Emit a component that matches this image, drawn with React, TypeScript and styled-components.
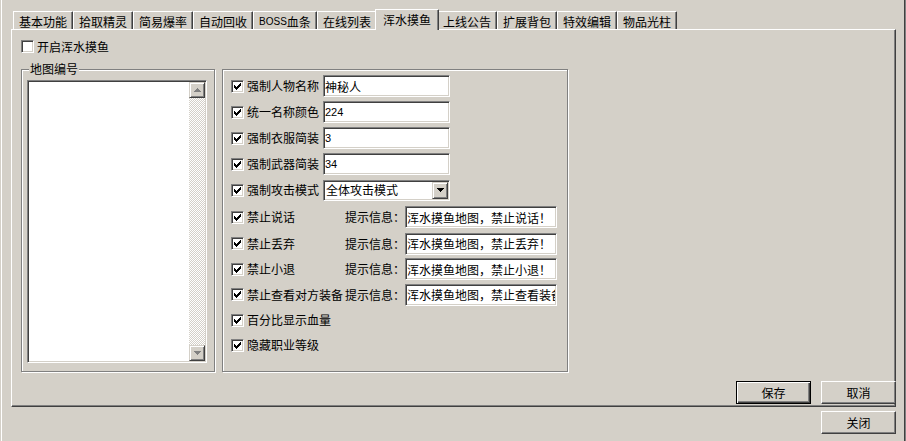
import React from "react";
import styled, { createGlobalStyle } from "styled-components";

const GlobalStyle = createGlobalStyle`
  html, body {
    margin: 0;
    padding: 0;
    background: #d4d0c8;
  }
  body {
    font-family: "Noto Sans CJK SC", "Liberation Sans", sans-serif;
    font-size: 12px;
    color: #000;
  }
`;

const Window = styled.div`
  width: 906px;
  height: 441px;
  box-sizing: border-box;
  padding: 9px 0 0 11px;
  display: flex;
  flex-direction: column;
  align-items: flex-start;
  background: #d4d0c8;
  box-shadow: inset 1px 0 0 #d4d0c8, inset 2px 0 0 #fff, inset -1px 0 0 #808080,
    inset -2px 0 0 #404040;
`;

const TabStrip = styled.div`
  display: flex;
  align-items: flex-end;
  height: 20px;
  margin-left: 2px;
`;

const Tab = styled.div<{ $active?: boolean }>`
  position: relative;
  box-sizing: border-box;
  height: ${(p) => (p.$active ? "21px" : "18px")};
  margin: ${(p) => (p.$active ? "0 -2px -1px" : "0")};
  z-index: ${(p) => (p.$active ? 1 : 0)};
  padding: ${(p) => (p.$active ? "0 7px 1px" : "2px 5px 0")};
  display: flex;
  align-items: center;
  justify-content: center;
  line-height: 12px;
  white-space: nowrap;
  background: #d4d0c8;
  border-top: 1px solid #fff;
  border-left: 1px solid #fff;
  border-right: 1px solid #404040;
  border-top-right-radius: 1px;
  box-shadow: inset -1px 0 0 #808080;
`;

const Latin = styled.span`
  font-family: "Liberation Sans", sans-serif;
  font-size: 10px;
`;

const Panel = styled.div`
  width: 885px;
  height: 378px;
  box-sizing: border-box;
  border-top: 1px solid #fff;
  border-left: 1px solid #fff;
  border-right: 1px solid #404040;
  border-bottom: 1px solid #404040;
  box-shadow: inset -1px -1px 0 #808080;
  padding: 9px 0 0 9px;
  display: flex;
  flex-direction: column;
`;

const Row = styled.div<{ $h: number }>`
  display: flex;
  align-items: center;
  height: ${(p) => p.$h}px;
`;

const Box = styled.span`
  width: 13px;
  height: 13px;
  box-sizing: border-box;
  flex-shrink: 0;
  display: flex;
  align-items: center;
  justify-content: center;
  background: #fff;
  border: 1px solid;
  border-color: #808080 #fff #fff #808080;
  box-shadow: inset 1px 1px 0 #404040, inset -1px -1px 0 #d4d0c8;
`;

const Label = styled.span<{ $w?: number }>`
  margin-left: 3px;
  line-height: 12px;
  white-space: nowrap;
  width: ${(p) => (p.$w ? `${p.$w}px` : "auto")};
  flex-shrink: 0;
`;

const Prompt = styled.span`
  width: 60px;
  line-height: 12px;
  white-space: nowrap;
  flex-shrink: 0;
`;

const GroupRow = styled.div`
  display: flex;
  gap: 7px;
  margin-top: 15px;
`;

const Group = styled.div<{ $w: number }>`
  position: relative;
  width: ${(p) => p.$w}px;
  height: 303px;
  box-sizing: border-box;
  border: 1px solid #808080;
  box-shadow: inset 1px 1px 0 #fff, 1px 1px 0 #fff;
`;

const LeftGroup = styled(Group)`
  padding: 10px 0 0 5px;
`;

const RightGroup = styled(Group)`
  padding: 3px 0 0 8px;
  display: flex;
  flex-direction: column;
`;

const Legend = styled.span`
  position: absolute;
  top: -8px;
  left: 7px;
  padding: 0 1px;
  line-height: 14px;
  background: #d4d0c8;
`;

const ListBox = styled.div`
  width: 180px;
  height: 283px;
  box-sizing: border-box;
  padding: 1px;
  display: flex;
  justify-content: flex-end;
  background: #fff;
  border: 1px solid;
  border-color: #808080 #fff #fff #808080;
  box-shadow: inset 1px 1px 0 #404040, inset -1px -1px 0 #d4d0c8;
`;

const ScrollBar = styled.div`
  width: 16px;
  display: flex;
  flex-direction: column;
`;

const Track = styled.div`
  flex: 1;
  background: repeating-conic-gradient(#fff 0 25%, #d4d0c8 0 50%) 0 0 / 2px 2px;
`;

const ArrowBtn = styled.div`
  width: 16px;
  height: 16px;
  box-sizing: border-box;
  flex-shrink: 0;
  display: flex;
  align-items: center;
  justify-content: center;
  background: #d4d0c8;
  border: 1px solid;
  border-color: #d4d0c8 #404040 #404040 #d4d0c8;
  box-shadow: inset 1px 1px 0 #fff, inset -1px -1px 0 #808080;
`;

const TextBox = styled.input<{ $w: number; $num?: boolean }>`
  width: ${(p) => p.$w}px;
  height: 22px;
  box-sizing: border-box;
  margin: 0;
  padding: 0 1px;
  background: #fff;
  border: 1px solid;
  border-color: #808080 #fff #fff #808080;
  box-shadow: inset 1px 1px 0 #404040, inset -1px -1px 0 #d4d0c8;
  outline: none;
  color: #000;
  font-family: ${(p) =>
    p.$num
      ? '"Liberation Sans", sans-serif'
      : '"Noto Sans CJK SC", "Liberation Sans", sans-serif'};
  font-size: ${(p) => (p.$num ? "11px" : "12px")};
`;

const Combo = styled.div`
  width: 127px;
  height: 21px;
  box-sizing: border-box;
  padding: 1px 1px 1px 2px;
  display: flex;
  align-items: center;
  justify-content: space-between;
  background: #fff;
  border: 1px solid;
  border-color: #808080 #fff #fff #808080;
  box-shadow: inset 1px 1px 0 #404040, inset -1px -1px 0 #d4d0c8;
  line-height: 12px;
`;

const ComboBtn = styled(ArrowBtn)`
  height: 17px;
`;

const ButtonRow = styled.div`
  display: flex;
  justify-content: flex-end;
  gap: 10px;
  margin-top: 9px;
  margin-right: -1px;
`;

const Button = styled.div<{ $default?: boolean }>`
  width: 75px;
  height: 23px;
  box-sizing: border-box;
  display: flex;
  align-items: center;
  justify-content: center;
  line-height: 12px;
  background: #d4d0c8;
  border: 1px solid;
  border-color: ${(p) => (p.$default ? "#000" : "#fff #404040 #404040 #fff")};
  box-shadow: ${(p) =>
    p.$default
      ? "inset 1px 1px 0 #fff, inset -1px -1px 0 #404040, inset -2px -2px 0 #808080"
      : "inset -1px -1px 0 #808080"};
`;

const CloseButton = styled(Button)`
  align-self: flex-end;
  margin-top: 4px;
  margin-right: 10px;
`;

const Check = () => (
  <svg width="7" height="7" viewBox="0 0 7 7" shapeRendering="crispEdges">
    <path
      d="M0 2h1v3H0z M1 3h1v3H1z M2 4h1v3H2z M3 3h1v3H3z M4 2h1v3H4z M5 1h1v3H5z M6 0h1v3H6z"
      fill="#000"
    />
  </svg>
);

const Tri = ({ down, color }: { down?: boolean; color: string }) => (
  <svg width="7" height="4" viewBox="0 0 7 4" shapeRendering="crispEdges">
    <path
      d={down ? "M0 0h7v1H0z M1 1h5v1H1z M2 2h3v1H2z M3 3h1v1H3z" : "M3 0h1v1H3z M2 1h3v1H2z M1 2h5v1H1z M0 3h7v1H0z"}
      fill={color}
    />
  </svg>
);

const CheckBox = ({ checked }: { checked?: boolean }) => <Box>{checked && <Check />}</Box>;

const tabs = ["基本功能", "拾取精灵", "简易爆率", "自动回收", "BOSS", "在线列表", "浑水摸鱼", "上线公告", "扩展背包", "特效编辑", "物品光柱"];

const fields = [
  { label: "强制人物名称", value: "神秘人" },
  { label: "统一名称颜色", value: "224", num: true },
  { label: "强制衣服简装", value: "3", num: true },
  { label: "强制武器简装", value: "34", num: true },
];

const bans = [
  { label: "禁止说话", msg: "浑水摸鱼地图，禁止说话！", h: 28 },
  { label: "禁止丢弃", msg: "浑水摸鱼地图，禁止丢弃！", h: 25 },
  { label: "禁止小退", msg: "浑水摸鱼地图，禁止小退！", h: 26 },
  { label: "禁止查看对方装备", msg: "浑水摸鱼地图，禁止查看装备！", h: 25 },
];

export default function App() {
  return (
    <>
      <GlobalStyle />
      <Window>
        <TabStrip>
          {tabs.map((t) => (
            <Tab key={t} $active={t === "浑水摸鱼"}>
              {t === "BOSS" ? (
                <>
                  <Latin>BOSS</Latin>血条
                </>
              ) : (
                t
              )}
            </Tab>
          ))}
        </TabStrip>
        <Panel>
          <Row $h={15}>
            <CheckBox />
            <Label>开启浑水摸鱼</Label>
          </Row>
          <GroupRow>
            <LeftGroup $w={194}>
              <Legend>地图编号</Legend>
              <ListBox>
                <ScrollBar>
                  <ArrowBtn>
                    <Tri color="#808080" />
                  </ArrowBtn>
                  <Track />
                  <ArrowBtn>
                    <Tri down color="#808080" />
                  </ArrowBtn>
                </ScrollBar>
              </ListBox>
            </LeftGroup>
            <RightGroup $w={346}>
              {fields.map((f) => (
                <Row $h={26} key={f.label}>
                  <CheckBox checked />
                  <Label $w={76}>{f.label}</Label>
                  <TextBox $w={127} $num={f.num} readOnly defaultValue={f.value} />
                </Row>
              ))}
              <Row $h={26}>
                <CheckBox checked />
                <Label $w={76}>强制攻击模式</Label>
                <Combo>
                  <span>全体攻击模式</span>
                  <ComboBtn>
                    <Tri down color="#000" />
                  </ComboBtn>
                </Combo>
              </Row>
              {bans.map((b) => (
                <Row $h={b.h} key={b.label}>
                  <CheckBox checked />
                  <Label $w={98}>{b.label}</Label>
                  <Prompt>提示信息：</Prompt>
                  <TextBox $w={152} readOnly defaultValue={b.msg} />
                </Row>
              ))}
              <Row $h={26}>
                <CheckBox checked />
                <Label>百分比显示血量</Label>
              </Row>
              <Row $h={24}>
                <CheckBox checked />
                <Label>隐藏职业等级</Label>
              </Row>
            </RightGroup>
          </GroupRow>
          <ButtonRow>
            <Button $default>保存</Button>
            <Button>取消</Button>
          </ButtonRow>
        </Panel>
        <CloseButton>关闭</CloseButton>
      </Window>
    </>
  );
}
